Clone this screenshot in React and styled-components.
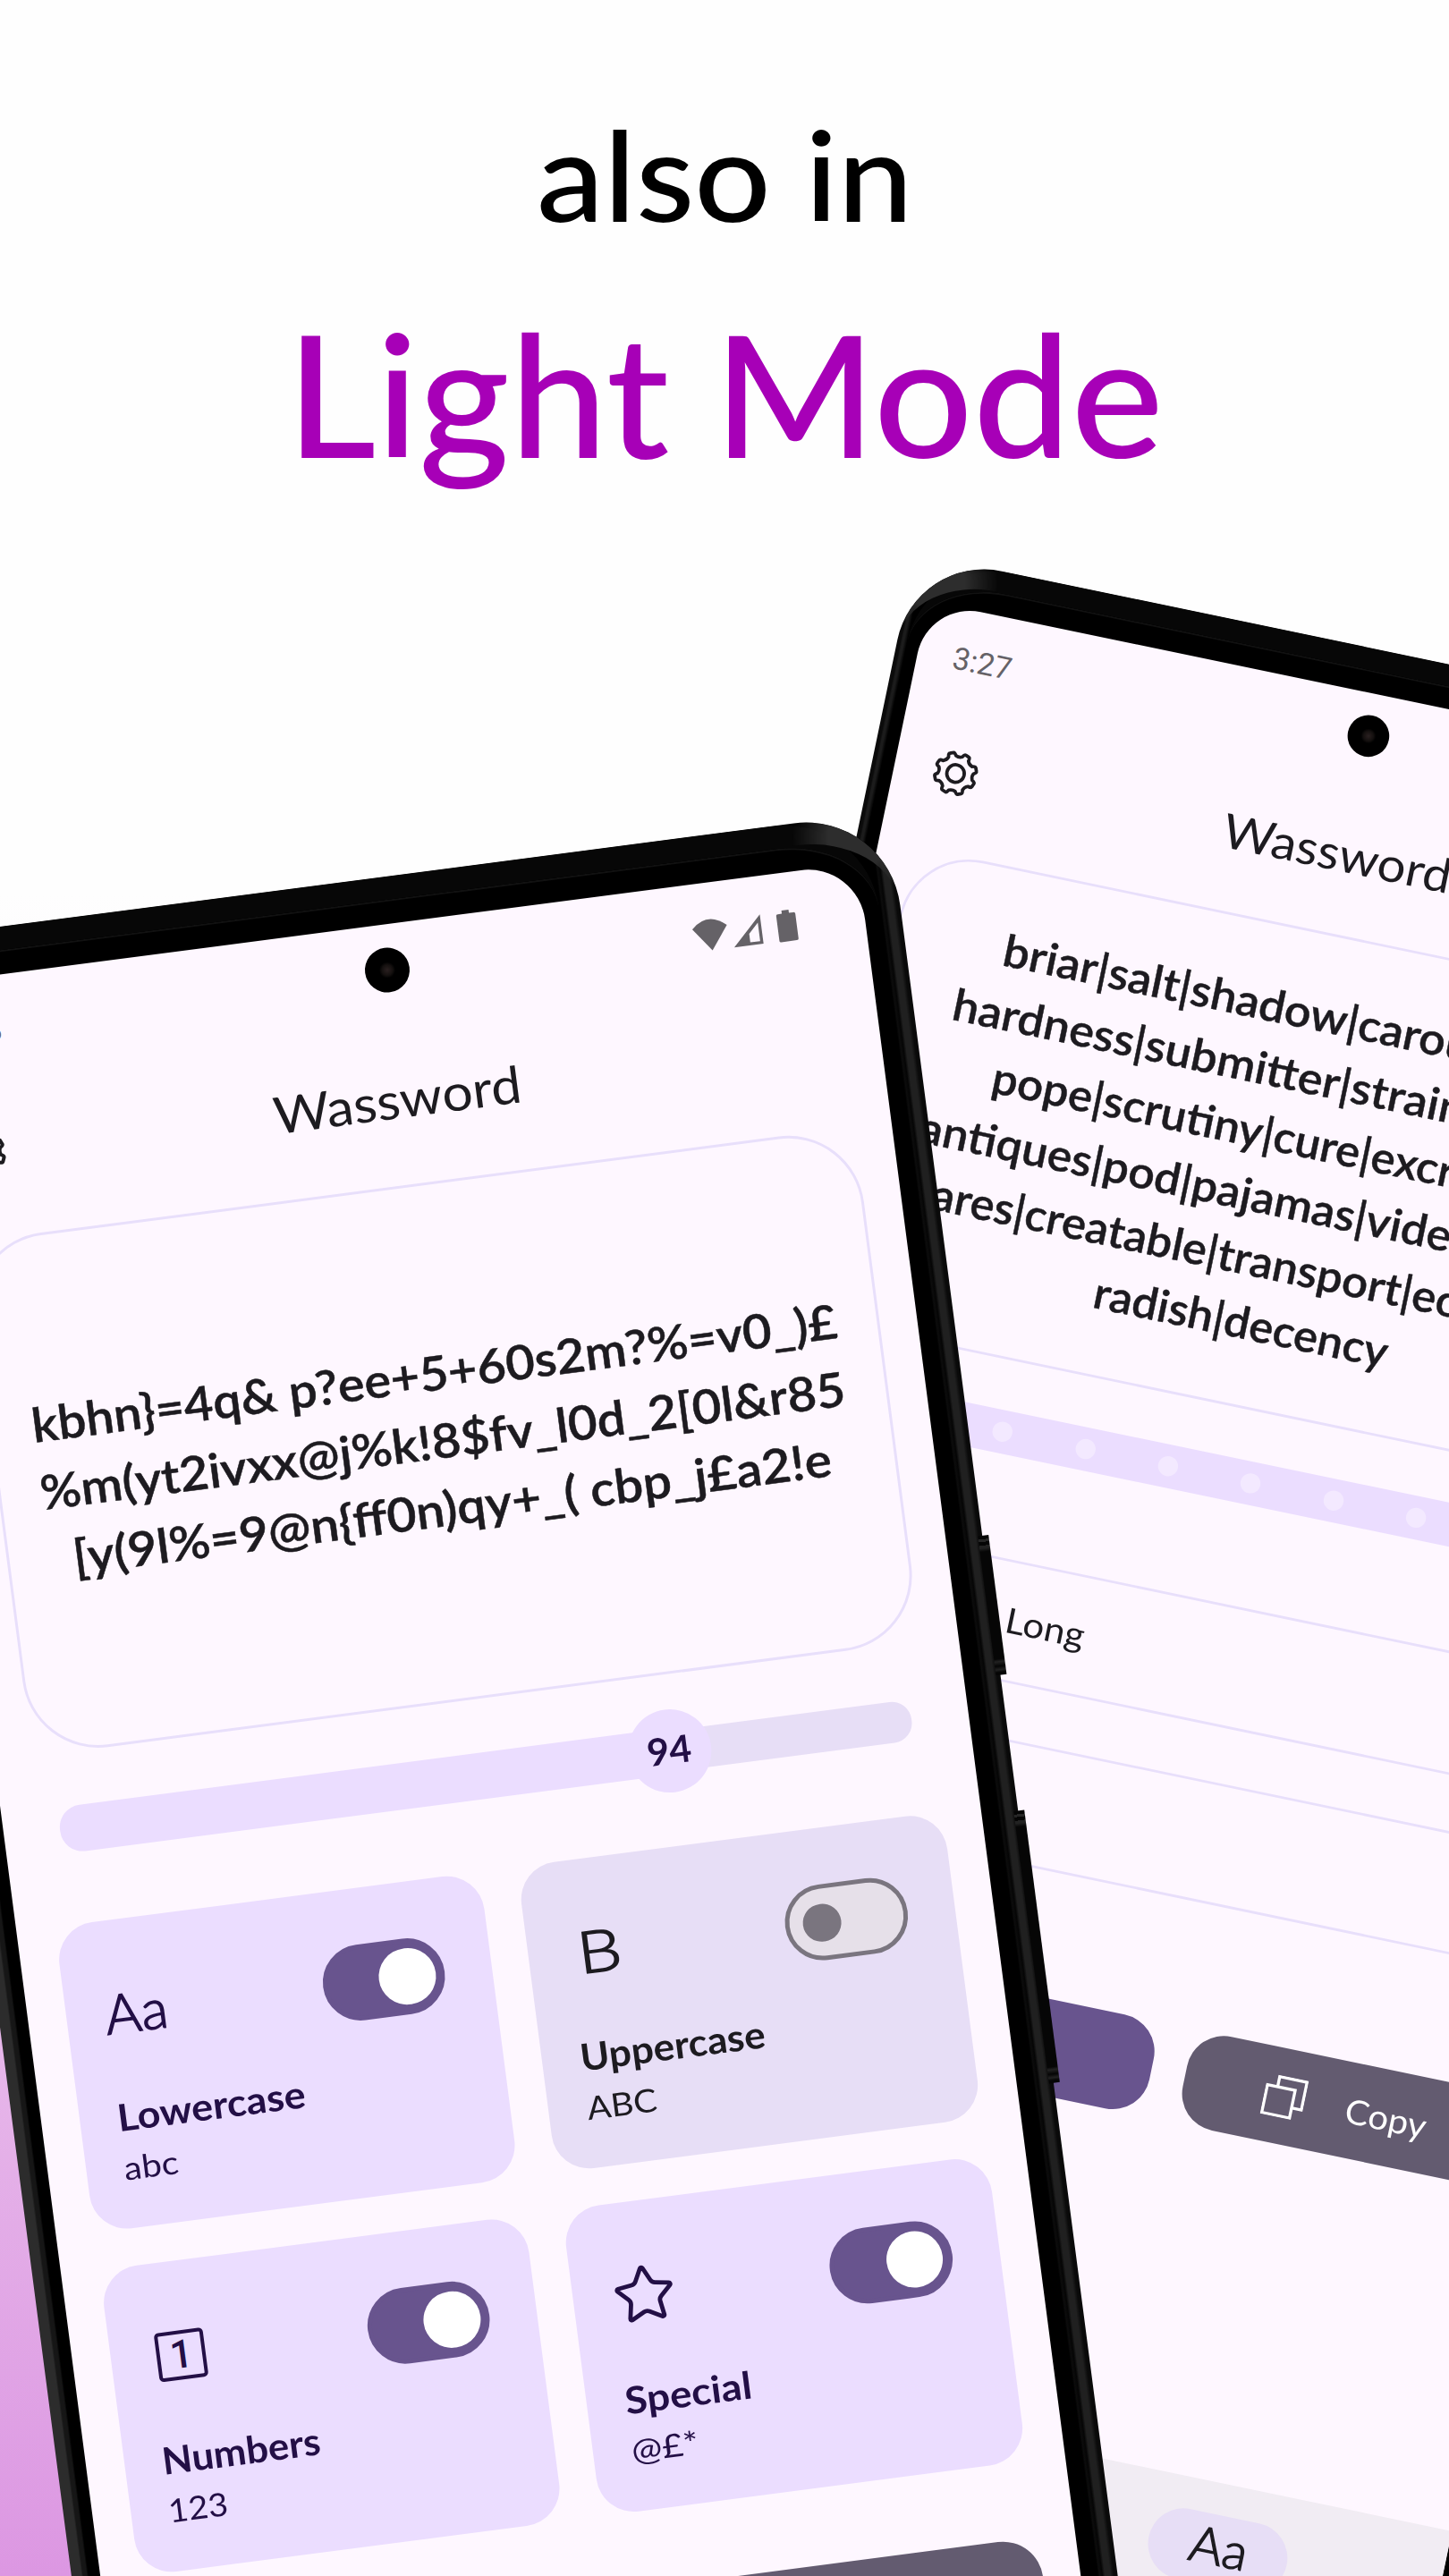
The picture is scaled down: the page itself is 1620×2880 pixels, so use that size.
import React, { useLayoutEffect, useRef, useState } from 'react';
import styled, { createGlobalStyle } from 'styled-components';
import { Star } from 'lucide-react';

const color = {
  surface: '#fef7ff',
  ink: '#1d1b20',
  primary: '#68548e',
  secondary: '#635b70',
  container: '#ebddff',
  onContainer: '#230f46',
  muted: '#e7def6',
  line: '#e8dffb',
  status: '#656267',
};

const GlobalStyle = createGlobalStyle`
  *, *::before, *::after { box-sizing: border-box; }
  body { margin: 0; font-family: Lato, "Noto Sans", sans-serif; }
`;

const Poster = styled.main`
  position: relative;
  width: 1620px;
  height: 2880px;
  overflow: hidden;
  background: linear-gradient(#fefefe 0, #fefefe 1000px, #f5e3f6 1650px, #e7b8ea 2260px, #dc97e2 2880px);
`;

const Headline = styled.header`
  display: flex;
  flex-direction: column;
  align-items: center;
  gap: 79.5px;
  padding: 124px 0 0 1px;
  font-weight: 500;
`;

const HeadlineLine = styled.div`
  font-size: ${(p) => p.$size}px;
  line-height: 1;
  color: ${(p) => p.$color};
`;

/* Phones are loose objects on the poster, so they are placed freely. */
const Phone = styled.section`
  position: absolute;
  left: ${(p) => p.$x - p.$bezelLeft}px;
  top: ${(p) => p.$y - 53}px;
  padding: 53px ${(p) => p.$bezelRight}px 53px ${(p) => p.$bezelLeft}px;
  border-radius: 106px;
  background: ${(p) => p.$edge};
  transform-origin: ${(p) => p.$bezelLeft}px 53px;
  transform: rotate(${(p) => p.$angle}deg) scale(${(p) => p.$scale});
`;

const Rim = styled.i`
  position: absolute;
  inset: 0 ${(p) => p.$right}px 0 ${(p) => p.$left}px;
  border-top: 26px solid #070707;
  border-radius: 106px;
  box-shadow: inset 0 2px 0 #111;
`;

const Glint = styled.i`
  position: absolute;
  top: 0;
  ${(p) => p.$side}: 0;
  width: 150px;
  height: 150px;
  border-top: 25px solid #2d2d2d;
  border-top-${(p) => p.$side}-radius: 106px;
  mask-image: radial-gradient(circle at ${(p) => (p.$side === 'right' ? '76% 16%' : '22% 20%')}, #000 20%, transparent 44%);
`;

const VolumeKey = styled.i`
  position: absolute;
  right: -7px;
  top: ${(p) => p.$top + 53}px;
  width: 12px;
  height: ${(p) => p.$length}px;
  background: linear-gradient(#050505 0 4px, #262626 4px 7px, #050505 7px 11px, #222 11px 14px, #060606 18px calc(100% - 18px), #222 calc(100% - 15px), #050505 calc(100% - 10px), #222 calc(100% - 6px), #050505 calc(100% - 3px));
`;

const Screen = styled.div`
  position: relative;
  display: flex;
  flex-direction: column;
  width: 1087px;
  height: 2415px;
  overflow: hidden;
  border-radius: 64px;
  background: ${color.surface};
  color: ${color.ink};
`;

const Camera = styled.i`
  position: absolute;
  left: 525px;
  top: 26px;
  width: 50px;
  height: 50px;
  border-radius: 50%;
  background: radial-gradient(circle, #2a2020 0, #14100f 6px, #000 9px);
`;

const StatusBar = styled.div`
  display: flex;
  align-items: center;
  justify-content: space-between;
  height: 120px;
  padding: 0 75px 0 43px;
  font: 400 37px/1 Roboto, sans-serif;
  color: ${color.status};
`;

const StatusIcons = styled.div`
  display: flex;
  align-items: center;
`;

const AppBar = styled.div`
  display: grid;
  grid-template-columns: 64px 1fr 64px;
  align-items: center;
  height: 151.5px;
  padding: 0 42px;
  margin-bottom: 20px;
`;

const AppTitle = styled.div`
  text-align: center;
  font-size: 57px;
  line-height: 74px;
  padding: 0 3px 2px 0;
`;

const PasswordCard = styled.div`
  display: flex;
  flex-direction: column;
  justify-content: center;
  align-items: ${(p) => (p.$indented ? 'flex-start' : 'center')};
  height: 580px;
  margin: 0 42.5px;
  padding-bottom: 4px;
  border: 3px solid ${color.line};
  border-radius: 85px;
  font-size: 53px;
  font-weight: 600;
  line-height: 76px;
  -webkit-text-stroke: 0.5px currentColor;
`;

const PasswordLine = styled.div`
  padding-left: ${(p) => p.$indent || 0}px;
  white-space: pre;
`;

const SliderRow = styled.div`
  display: flex;
  align-items: center;
  height: 93px;
  margin: 39.5px 64px 60px 62.5px;
`;

const Filled = styled.div`
  display: flex;
  align-items: center;
  gap: 77.4px;
  flex: 0 0 ${(p) => p.$length}px;
  height: 52px;
  padding-left: 13px;
  border-radius: 25px 0 0 25px;
  background: ${color.container};
`;

const Tick = styled.i`
  flex: none;
  width: 24px;
  height: 24px;
  border-radius: 50%;
  background: #f3e9ff;
`;

const Thumb = styled.div`
  flex: none;
  width: 93px;
  height: 93px;
  margin: 0 -46.5px;
  border-radius: 50%;
  background: ${color.container};
  color: ${color.onContainer};
  font-size: 42px;
  font-weight: 700;
  line-height: 91px;
  text-align: center;
  z-index: 1;
`;

const Remaining = styled.div`
  flex: 1;
  height: 46px;
  border-radius: 0 22px 22px 0;
  background: ${color.muted};
`;

const TileGrid = styled.div`
  display: grid;
  grid-template-columns: 1fr 1fr;
  gap: 41.7px 42px;
  margin: 0 43px 86px 42.5px;
`;

const Tile = styled.div`
  height: 345px;
  padding: 42.3px;
  border-radius: 42px;
  background: ${(p) => (p.$on ? color.container : color.muted)};
  color: ${(p) => (p.$on ? color.onContainer : color.ink)};
`;

const TileHead = styled.div`
  display: flex;
  align-items: center;
  justify-content: space-between;
  height: 126.8px;
  padding-right: 11px;
  margin-bottom: 20px;
`;

const IconSlot = styled.div`
  display: flex;
  align-items: center;
  justify-content: center;
  width: 74px;
`;

const Letters = styled.span`
  padding-bottom: ${(p) => p.$lift}px;
  font-size: ${(p) => p.$size}px;
  font-weight: 300;
  line-height: 74px;
  -webkit-text-stroke: 1.5px currentColor;
`;

const BoxedDigit = styled.span`
  width: 55px;
  height: 55px;
  border: 4.6px solid currentColor;
  border-radius: 5px;
  font: 500 44px/47px Roboto, sans-serif;
  text-align: center;
`;

const Track = styled.div`
  display: flex;
  align-items: center;
  justify-content: ${(p) => (p.$on ? 'flex-end' : 'flex-start')};
  width: 137.4px;
  height: 84.5px;
  padding: 0 ${(p) => (p.$on ? 5.3 : 15)}px;
  border: 5.3px solid ${(p) => (p.$on ? color.primary : '#7a757f')};
  border-radius: 43px;
  background: ${(p) => (p.$on ? color.primary : '#e6e0e9')};
`;

const Knob = styled.i`
  width: ${(p) => (p.$on ? 63.4 : 42.3)}px;
  height: ${(p) => (p.$on ? 63.4 : 42.3)}px;
  border-radius: 50%;
  background: ${(p) => (p.$on ? '#fff' : '#7a757f')};
`;

const TileTitle = styled.div`
  font-size: 42px;
  font-weight: 700;
  line-height: 63.4px;
`;

const TileHint = styled.div`
  font-size: 36px;
  line-height: 49px;
`;

const Rows = styled.div`
  display: flex;
  flex-direction: column;
  gap: 66px;
  margin: 42px 42.5px 150px;
`;

const OutlinedRow = styled.div`
  display: flex;
  align-items: center;
  height: 145.5px;
  padding: 0 0 3px 294px;
  border: 3px solid ${color.line};
  border-radius: 42px;
  font-size: 42px;
  line-height: 64px;
`;

const Actions = styled.div`
  display: flex;
  gap: 41px;
  margin: 0 42.5px;
`;

const ActionButton = styled.div`
  display: flex;
  flex: 0 0 ${(p) => p.$width}px;
  align-items: center;
  justify-content: center;
  gap: 50px;
  height: 115px;
  padding-left: 11px;
  border-radius: 45px;
  background: ${(p) => p.$fill};
  color: #fff;
  font-size: 41px;
`;

const NavBar = styled.div`
  display: grid;
  grid-template-columns: 1fr 1fr;
  justify-items: center;
  flex: 1;
  margin-top: 412px;
  padding: 38px 0 0 6px;
  background: #f1ecf3;
`;

const NavPill = styled.div`
  grid-column: 2;
  width: 169px;
  height: 84.5px;
  border-radius: 43px;
  background: ${color.muted};
  color: ${color.ink};
  text-align: center;
`;

const RunBox = styled.span`
  display: inline-block;
  text-align: left;
  white-space: pre;
`;

const Run = styled.span`
  display: inline-block;
  transform-origin: 0 50%;
`;

/* Widens or narrows a run of text so that it fills exactly the given width. */
function Fit({ width, children }) {
  const ref = useRef(null);
  const [ratio, setRatio] = useState(1);
  useLayoutEffect(() => {
    setRatio(width / ref.current.offsetWidth);
  }, [width, children]);
  return (
    <RunBox style={{ width }}>
      <Run ref={ref} style={{ transform: `scaleX(${ratio})` }}>
        {children}
      </Run>
    </RunBox>
  );
}

function gearPath() {
  const at = (r, deg) => {
    const a = (deg * Math.PI) / 180;
    return `${(32 + r * Math.cos(a)).toFixed(2)} ${(32 + r * Math.sin(a)).toFixed(2)}`;
  };
  let d = '';
  for (let i = 0; i < 8; i += 1) {
    const c = 22.5 + i * 45;
    d += `${i ? 'L' : 'M'}${at(21.5, c - 12)} Q${at(25.5, c - 9)} ${at(25.2, c - 5)} L${at(25.2, c + 5)} Q${at(25.5, c + 9)} ${at(21.5, c + 12)} Q${at(19.2, c + 22.5)} ${at(21.5, c + 33)} `;
  }
  return `${d}Z`;
}

const Gear = () => (
  <svg width="64" height="64" viewBox="0 0 64 64" fill="none" stroke="currentColor" strokeWidth="4" strokeLinejoin="round">
    <path d={gearPath()} />
    <circle cx="32" cy="32" r="10.5" />
  </svg>
);

const SignalIcons = () => (
  <svg width="118" height="40" viewBox="0 0 118 40" fill="currentColor">
    <path d="M0 10 Q19 -8 39 10 L19.5 36 Z" />
    <path fillRule="evenodd" d="M77 3 V36 H44 Z M73.6 12 L62.5 23 V32.7 H73.6 Z" />
    <path d="M97 5.5 H101.500 V2 H109.500 V5.500 H114.500 Q116.500 5.500 116.500 7.500 V35.500 Q116.500 37 114.500 37 H97 Q95 37 95 35.500 V7 Q95 5.500 97 5.500 Z" />
  </svg>
);

const CopyIcon = () => (
  <svg width="50" height="50" viewBox="0 0 50 50" fill="none" stroke="currentColor" strokeWidth="3.6">
    <path d="M2 14.500 H36 V48.500 H2 Z M14.500 14 V2 H48 V36 H37" />
  </svg>
);

function ScreenTop({ time }) {
  return (
    <>
      <StatusBar>
        <span>{time}</span>
        <StatusIcons>
          <SignalIcons />
        </StatusIcons>
      </StatusBar>
      <Camera />
      <AppBar>
        <Gear />
        <AppTitle>
          <Fit width={279}>Wassword</Fit>
        </AppTitle>
      </AppBar>
    </>
  );
}

function OptionTile({ icon, title, titleWidth, hint, hintWidth, on }) {
  return (
    <Tile $on={on}>
      <TileHead>
        <IconSlot>{icon}</IconSlot>
        <Track $on={on}>
          <Knob $on={on} />
        </Track>
      </TileHead>
      <TileTitle>
        <Fit width={titleWidth}>{title}</Fit>
      </TileTitle>
      <TileHint>
        <Fit width={hintWidth}>{hint}</Fit>
      </TileHint>
    </Tile>
  );
}

const phraseLines = [
  { text: 'briar|salt|shadow|carousel', indent: 128, width: 641 },
  { text: 'hardness|submitter|strain|', indent: 82, width: 641 },
  { text: 'pope|scrutiny|cure|excretion', indent: 146, width: 691 },
  { text: 'antiques|pod|pajamas|video|', indent: 73, width: 697 },
  { text: 'ares|creatable|transport|eco', indent: 104, width: 674 },
  { text: 'radish|decency', indent: 318, width: 359 },
];

const frontEdge =
  'linear-gradient(to right, #2c2c2c 0 11px, #161616 13px 17px, #000 19px calc(100% - 22px), #0c0c0c calc(100% - 20px), #050505 calc(100% - 17px), #202020 calc(100% - 14px) calc(100% - 8px), #0a0a0a calc(100% - 4px))';
const backEdge =
  'linear-gradient(to right, #0b0b0b 0 4px, #1c1c1c 6px 8px, #000 12px calc(100% - 12px), #1c1c1c calc(100% - 8px))';

export default function App() {
  return (
    <Poster>
      <GlobalStyle />
      <Headline>
        <HeadlineLine $size={140} $color="#000">
          <Fit width={421}>also in</Fit>
        </HeadlineLine>
        <HeadlineLine $size={189} $color="#a700b7">
          <Fit width={981}>Light Mode</Fit>
        </HeadlineLine>
      </Headline>

      <Phone $x={1037.6} $y={672.3} $angle={11.75} $scale={0.9315} $bezelLeft={27} $bezelRight={32} $edge={backEdge}>
        <Rim $left={12} $right={12} />
        <Glint $side="left" />
        <Screen>
          <ScreenTop time="3:27" />
          <PasswordCard $indented>
            {phraseLines.map((line) => (
              <PasswordLine key={line.text} $indent={line.indent}>
                <Fit width={line.width}>{line.text}</Fit>
              </PasswordLine>
            ))}
          </PasswordCard>
          <SliderRow>
            <Filled $length={880}>
              {Array.from({ length: 8 }, (_, i) => (
                <Tick key={i} />
              ))}
            </Filled>
            <Remaining />
          </SliderRow>
          <Rows>
            <OutlinedRow>
              <Fit width={96}>Long</Fit>
            </OutlinedRow>
            <OutlinedRow />
          </Rows>
          <Actions>
            <ActionButton $width={578} $fill={color.primary} />
            <ActionButton $width={383} $fill={color.secondary}>
              <CopyIcon />
              <Fit width={99}>Copy</Fit>
            </ActionButton>
          </Actions>
          <NavBar>
            <NavPill>
              <Letters $size={60}>
                <Fit width={70}>Aa</Fit>
              </Letters>
            </NavPill>
          </NavBar>
        </Screen>
      </Phone>

      <Phone $x={-119.3} $y={1105.2} $angle={-7.42} $scale={1} $bezelLeft={32} $bezelRight={41} $edge={frontEdge}>
        <Rim $left={22} $right={24} />
        <Glint $side="right" />
        <VolumeKey $top={764} $length={157} />
        <VolumeKey $top={1074} $length={307} />
        <Screen>
          <ScreenTop time="3:28" />
          <PasswordCard>
            <PasswordLine>
              <Fit width={907}>{'kbhn}=4q& p?ee+5+60s2m?%=v0_)£'}</Fit>
            </PasswordLine>
            <PasswordLine>
              <Fit width={907}>{'%m(yt2ivxx@j%k!8$fv_l0d_2[0l&r85'}</Fit>
            </PasswordLine>
            <PasswordLine>
              <Fit width={854}>{'[y(9l%=9@n{ff0n)qy+_( cbp_j£a2!e'}</Fit>
            </PasswordLine>
          </PasswordCard>
          <SliderRow>
            <Filled $length={687.5} />
            <Thumb>
              <Fit width={50}>94</Fit>
            </Thumb>
            <Remaining />
          </SliderRow>
          <TileGrid>
            <OptionTile
              on
              icon={
                <Letters $size={61} $lift={4}>
                  <Fit width={71}>Aa</Fit>
                </Letters>
              }
              title="Lowercase"
              titleWidth={212}
              hint="abc"
              hintWidth={61}
            />
            <OptionTile
              icon={
                <Letters $size={65} $lift={6}>
                  <Fit width={49}>B</Fit>
                </Letters>
              }
              title="Uppercase"
              titleWidth={208}
              hint="ABC"
              hintWidth={79}
            />
            <OptionTile on icon={<BoxedDigit>1</BoxedDigit>} title="Numbers" titleWidth={178} hint="123" hintWidth={67} />
            <OptionTile on icon={<Star size={72} strokeWidth={1.6} />} title="Special" titleWidth={143} hint="@£*" hintWidth={75} />
          </TileGrid>
          <Actions>
            <ActionButton $width={578} $fill={color.primary} />
            <ActionButton $width={383} $fill={color.secondary} />
          </Actions>
        </Screen>
      </Phone>
    </Poster>
  );
}
